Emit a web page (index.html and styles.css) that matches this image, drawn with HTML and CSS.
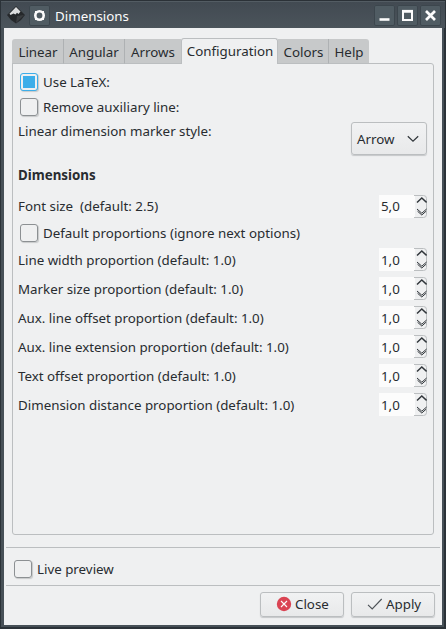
FILE: index.html
```html
<!DOCTYPE html>
<html lang="en">
<head>
<meta charset="utf-8">
<title>Dimensions</title>
<link rel="stylesheet" href="styles.css">
</head>
<body>
<svg class="defs" width="0" height="0">
  <symbol id="arrows" viewBox="0 0 13 23">
    <path d="M0 .5h9.500a3 3 0 0 1 3 3v16a3 3 0 0 1-3 3H0" fill="none" stroke="#bbbec0"/>
    <path d="M3 7.500 7.800 3 12.600 7.500" fill="none" stroke="#31363b" stroke-width="1.5"/>
    <path d="M3 14 7.800 18.200 12.600 14M3.500 16.200 7.800 20 12.100 16.200" fill="none" stroke="#31363b" stroke-width="1"/>
  </symbol>
</svg>
<div class="window">
  <header class="titlebar">
    <svg class="logo" width="18" height="18" viewBox="0 0 18 18">
      <path d="M9 0 18 9 14 14 9 17.5 4 14 0 9Z" fill="#25282b"/>
      <path d="M9 1 13.500 5.500 11.500 8 10 6.800 8.500 8.500 6.500 7.500 3.500 9 2.500 7.800Z" fill="#dcdedf"/>
      <path d="M10 10 17 9 9 17Z" fill="#3a3d40"/>
    </svg>
    <span class="tbtn pin"><svg width="21" height="21" viewBox="0 0 21 21"><circle cx="10.5" cy="10.5" r="4.200" fill="none" stroke="#fcfcfc" stroke-width="2.600"/><path d="M6 6h2v2H6zM13 6h2v2h-2zM6 13h2v2H6zM13 13h2v2h-2z" fill="#fcfcfc"/></svg></span>
    <h1>Dimensions</h1>
    <span class="tbtn"><svg width="21" height="21" viewBox="0 0 21 21"><path d="M5.5 14.5h10" stroke="#fcfcfc" stroke-width="2.6"/></svg></span>
    <span class="tbtn"><svg width="21" height="21" viewBox="0 0 21 21"><path d="M6 6.5h9v8.5H6z" fill="none" stroke="#fcfcfc" stroke-width="2"/><path d="M5 6.2h11" stroke="#fcfcfc" stroke-width="2.6"/></svg></span>
    <span class="tbtn"><svg width="21" height="21" viewBox="0 0 21 21"><path d="m6 6 9 9M15 6l-9 9" stroke="#fcfcfc" stroke-width="2.7"/></svg></span>
  </header>
  <main class="content">
    <nav class="tabs">
      <span class="tab t1">Linear</span><span class="tab t2">Angular</span><span class="tab t3">Arrows</span><span class="tab active">Configuration</span><span class="tab t5">Colors</span><span class="tab t6">Help</span>
    </nav>
    <section class="panel">
      <label class="check"><i class="box on"></i>Use LaTeX:</label>
      <label class="check"><i class="box"></i>Remove auxiliary line:</label>
      <div class="style-row"><span>Linear dimension marker style:</span>
        <span class="select">Arrow<svg width="12" height="8" viewBox="0 0 12 8"><path d="M.8 1.2 6 6.2 11.2 1.2" fill="none" stroke="#31363b" stroke-width="1.2"/></svg></span>
      </div>
      <h2>Dimensions</h2>
      <div class="row font-row"><span>Font size&nbsp; (default: 2.5)</span><span class="spin">5,0<svg width="13" height="23"><use href="#arrows"/></svg></span></div>
      <label class="check"><i class="box"></i>Default proportions (ignore next options)</label>
      <div class="row"><span>Line width proportion (default: 1.0)</span><span class="spin">1,0<svg width="13" height="23"><use href="#arrows"/></svg></span></div>
      <div class="row"><span>Marker size proportion (default: 1.0)</span><span class="spin">1,0<svg width="13" height="23"><use href="#arrows"/></svg></span></div>
      <div class="row"><span>Aux. line offset proportion (default: 1.0)</span><span class="spin">1,0<svg width="13" height="23"><use href="#arrows"/></svg></span></div>
      <div class="row"><span>Aux. line extension proportion (default: 1.0)</span><span class="spin">1,0<svg width="13" height="23"><use href="#arrows"/></svg></span></div>
      <div class="row"><span>Text offset proportion (default: 1.0)</span><span class="spin">1,0<svg width="13" height="23"><use href="#arrows"/></svg></span></div>
      <div class="row"><span>Dimension distance proportion (default: 1.0)</span><span class="spin">1,0<svg width="13" height="23"><use href="#arrows"/></svg></span></div>
    </section>
    <div class="preview"><label class="check"><i class="box"></i>Live preview</label></div>
    <footer class="actions">
      <span class="button"><svg width="16" height="16" viewBox="0 0 16 16"><circle cx="8" cy="8" r="7.2" fill="#da4453"/><path d="m5 5 6 6M11 5l-6 6" stroke="#fcfcfc" stroke-width="1.1"/></svg>Close</span>
      <span class="button"><svg width="16" height="16" viewBox="0 0 16 16"><path d="M1 8.8 5.2 13 14.7 3" fill="none" stroke="#4d5257" stroke-width="1.1"/></svg>Apply</span>
    </footer>
  </main>
</div>
</body>
</html>
```
FILE: styles.css
```css
* { box-sizing: border-box; }
body {
  margin: 0;
  font: 13.33px/18px "Noto Sans", sans-serif;
  color: #282c30;
  background: #2a3036;
}
.defs { position: absolute; }
svg { display: block; flex: none; }
.window {
  width: 446px;
  height: 629px;
  padding: 0 4px 4px;
  background: #475057;
  box-shadow: inset 1px 1px #2b3238, inset -2px -2px #2b3238;
}
.titlebar {
  display: flex;
  align-items: center;
  height: 28px;
  margin: 0 -3px;
  padding: 3px 2px 0 6px;
  background: linear-gradient(#2b3137 0 1px, #535c63 1px 2px, #424a52 2px, #4b545b);
}
.titlebar h1 {
  flex: 1;
  margin: 0 0 0 5px;
  font-size: 13.33px;
  font-weight: 400;
  color: #fcfcfc;
}
.tbtn {
  width: 21px;
  height: 21px;
  margin-right: 2px;
  border-radius: 2px;
  background: #505c63;
  box-shadow: inset 0 0 0 1px #3c464d;
}
.tbtn.pin { margin: 0 0 0 4px; }
.logo { margin-top: -1px; }
.content {
  height: 597px;
  padding: 10px 2px 0;
  background: #eff0f1;
}
.tabs {
  display: flex;
  align-items: flex-end;
  height: 26px;
  margin: 0 6px -1px;
  position: relative;
}
.tab {
  height: 25px;
  padding: 4px 0 0;
  text-align: center;
  white-space: nowrap;
  background: #c7c9ca;
  border-right: 1px solid #aeb1b3;
  border-bottom: 1px solid #bbbec0;
}
.t1 { width: 52px; padding-left: 1px; border-radius: 3px 0 0; }
.t2 { width: 61px; }
.t3 { width: 56px; border-right: 0; }
.t5 { width: 51px; padding-left: 1px; }
.t6 { width: 40px; border-right: 0; border-radius: 0 3px 0 0; }
.active {
  width: 97px;
  height: 26px;
  padding: 3px 0 0 1px;
  background: #eff0f1;
  border: 1px solid #bbbec0;
  border-bottom: 0;
  border-radius: 3px 3px 0 0;
}
.panel {
  height: 472px;
  margin: 0 6px;
  padding: 5px 6px 0 5px;
  border: 1px solid #bbbec0;
  border-radius: 0 3px 3px 3px;
}
.check {
  display: flex;
  align-items: center;
  height: 25px;
  padding-left: 2px;
}
.box {
  width: 18px;
  height: 18px;
  margin-right: 5px;
  border: 1px solid #8c9093;
  border-radius: 3px;
  box-shadow: 1px 1px 1px #c7c9ca;
}
.box.on {
  padding: 2px;
  border-color: #3daee9;
  background: #3daee9 content-box;
}
.style-row {
  display: flex;
  justify-content: space-between;
  height: 43px;
  padding-top: 3px;
}
.select {
  display: flex;
  align-items: center;
  justify-content: space-between;
  width: 76px;
  height: 33px;
  padding: 0 7px 0 5px;
}
.select, .button {
  border: 1px solid #bbbec0;
  border-radius: 3px;
  background: linear-gradient(#f1f2f3, #e8e9ea);
  box-shadow: 0 1px 1px #c5c7c9;
}
h2 {
  height: 26px;
  margin: 4px 0 0;
  font-size: 13.33px;
  line-height: 18px;
}
.row {
  display: flex;
  align-items: center;
  justify-content: space-between;
  height: 29px;
}
.font-row { height: 28px; }
.spin {
  display: flex;
  align-items: center;
  justify-content: space-between;
  width: 48px;
  height: 23px;
  padding-left: 2px;
  background: linear-gradient(90deg, #fcfcfc 36px, #eff0f1 36px);
}
.preview {
  height: 39px;
  margin-top: 12px;
  padding: 8px 6px 0;
  border: solid #bbbec0;
  border-width: 1px 0;
}
.actions {
  display: flex;
  justify-content: flex-end;
  gap: 7px;
  padding: 6px 5px 0;
}
.button {
  display: flex;
  align-items: center;
  gap: 3px;
  width: 84px;
  height: 25px;
  padding: 0 0 1px 15px;
}
```
